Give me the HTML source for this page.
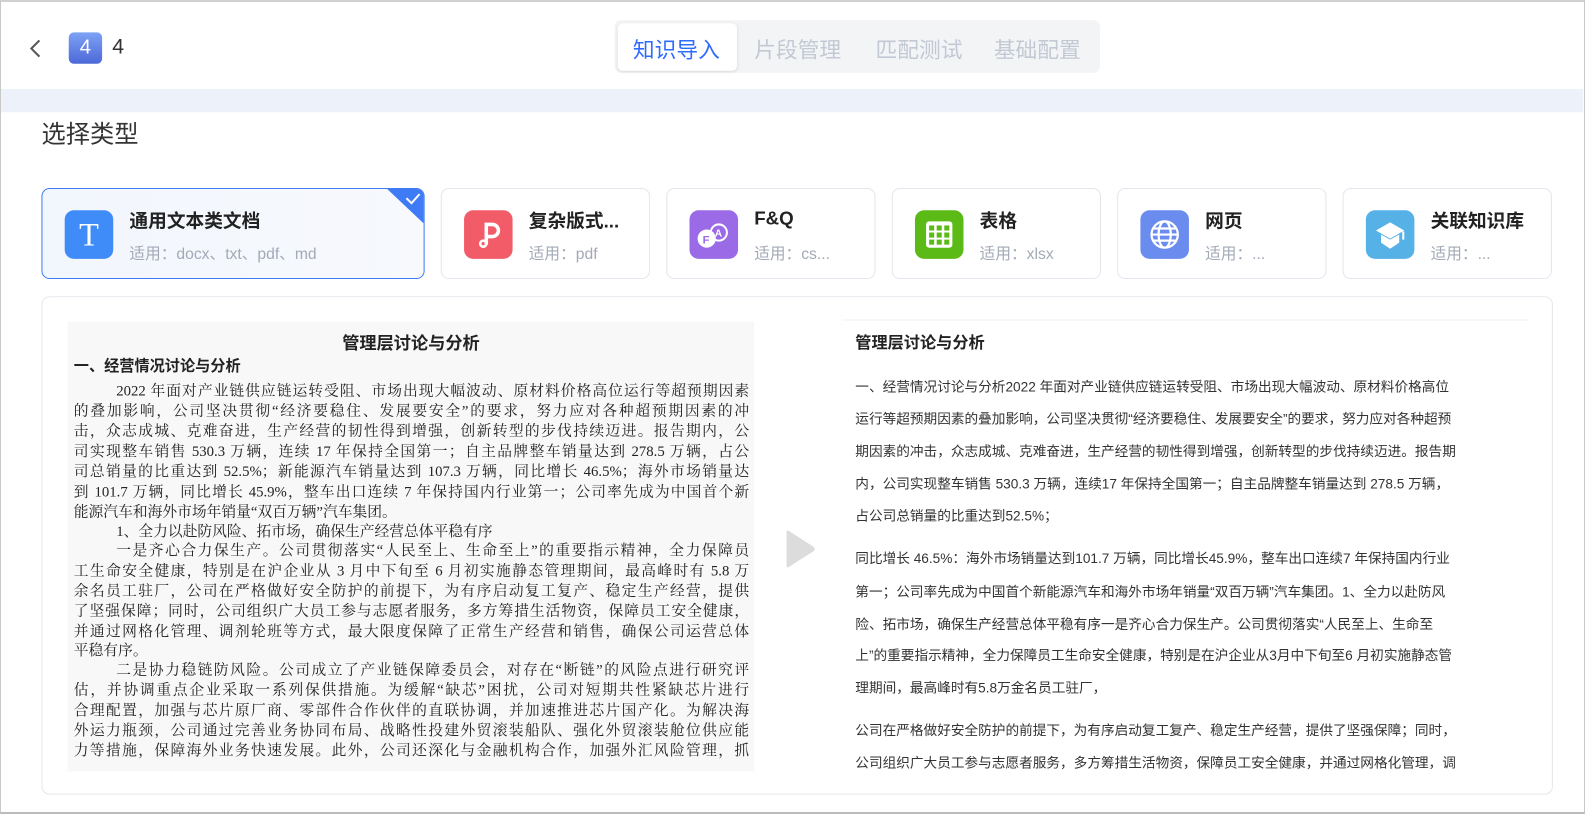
<!DOCTYPE html>
<html><head><meta charset="utf-8"><style>
*{margin:0;padding:0;box-sizing:border-box}
body{width:1585px;height:814px;background:#fff;font-family:"Liberation Sans","Noto Sans CJK SC",sans-serif;position:relative;overflow:hidden}
.frame{position:absolute;left:0;top:0;width:1585px;height:814px;border:1px solid #c8c8c8;border-top:2px solid #d0d0d0;border-bottom:2px solid #bbb}
.wrap{position:absolute;left:0;top:0;width:1585px;height:814px;transform:scale(1.011);transform-origin:0 0}
.abs{position:absolute}
.band{position:absolute;left:1px;top:88px;width:1565px;height:23px;background:#edf1f9}
.tabs{left:608px;top:20px;width:480px;height:52px;background:#f3f4f6;border-radius:6px}
.tab{position:absolute;font-size:21.5px;color:#c3c9d4}
.tab.on{color:#2f6bff}
.active{left:611px;top:23px;width:118px;height:47px;background:#fff;border-radius:5px;box-shadow:0 1px 3px rgba(0,0,0,.1)}
.card{position:absolute;top:186px;height:90px;border:1px solid #e3e6ec;border-radius:8px;background:#fff;overflow:hidden}
.card .ic{position:absolute;left:22px;top:21px;width:48px;height:48px;border-radius:9px}
.card .t{position:absolute;left:86px;top:18px;font-size:18.5px;font-weight:bold;color:#222;white-space:nowrap}
.card .s{position:absolute;left:86px;top:52px;font-size:15.5px;color:#a3a9b6;white-space:nowrap}
.doc{left:67px;top:318px;width:679px;height:445px;background:#f8f8f8;font-family:"Liberation Serif","Noto Serif CJK SC",serif;color:#222;font-size:14.6px}
.doc .l{position:absolute;left:6px;width:668px;text-align:justify;text-align-last:justify;white-space:nowrap;line-height:20px}
.doc .l.n{text-align-last:left}
.rp{left:833px;top:316px;width:679px;height:447px;background:#fff;border-top:1px solid #f0f0f0;overflow:hidden}
.rp .l{position:absolute;left:13px;font-size:13.5px;color:#333;white-space:nowrap;line-height:20px}
</style></head><body>
<div class="frame"></div>
<div class="wrap">
<svg class="abs" style="left:28px;top:38px" width="14" height="20" viewBox="0 0 14 20"><path d="M11 2 L3 10 L11 18" fill="none" stroke="#555" stroke-width="2"/></svg>
<div class="abs" style="left:68px;top:32px;width:33px;height:31px;border-radius:5px;background:linear-gradient(180deg,#7da2f5,#4d68d8);color:#fff;font-size:20px;text-align:center;line-height:31px">4</div>
<div class="abs" style="left:111px;top:35px;font-size:21px;color:#333">4</div>
<div class="abs tabs"></div>
<div class="abs active"></div>
<div class="tab on" style="left:626px;top:33px">知识导入</div>
<div class="tab" style="left:746px;top:33px">片段管理</div>
<div class="tab" style="left:866px;top:33px">匹配测试</div>
<div class="tab" style="left:983px;top:33px">基础配置</div>
<div class="band"></div>
<div class="abs" style="left:41px;top:113px;font-size:24px;color:#333">选择类型</div>

<div class="card" style="left:41px;width:379px;border-color:#3f7bf5;background:linear-gradient(90deg,#f2f6fd,#f7f9fd)">
<div class="ic" style="background:#3f8bf7"><span style="position:absolute;left:0;width:48px;top:6px;text-align:center;color:#fff;font-size:32px;font-family:'Liberation Serif',serif">T</span></div>
<div class="t">通用文本类文档</div><div class="s">适用：docx、txt、pdf、md</div>
<svg class="abs" style="right:0;top:0" width="36" height="34"><polygon points="0,0 36,0 36,34" fill="#3f7bf5"/><path d="M19 9 L24 14 L32 5" fill="none" stroke="#fff" stroke-width="2"/></svg>
</div>
<div class="card" style="left:436px;width:207px">
<div class="ic" style="background:#f25c68"><svg width="48" height="48"><path d="M22 34 V14 h6 a6 6 0 0 1 0 12 h-6" fill="none" stroke="#fff" stroke-width="3.5"/><circle cx="19" cy="33" r="3" fill="none" stroke="#fff" stroke-width="2.5"/></svg></div>
<div class="t">复杂版式...</div><div class="s">适用：pdf</div></div>
<div class="card" style="left:659px;width:207px">
<div class="ic" style="background:#9b6ae6"><svg width="48" height="48"><circle cx="17" cy="28" r="9" fill="#fff"/><circle cx="29" cy="22" r="8" fill="none" stroke="#fff" stroke-width="2"/><text x="13" y="33" font-size="11" font-weight="bold" fill="#9b6ae6" font-family="Liberation Sans">F</text><text x="25" y="26" font-size="10" font-weight="bold" fill="#fff" font-family="Liberation Sans">A</text></svg></div>
<div class="t">F&amp;Q</div><div class="s">适用：cs...</div></div>
<div class="card" style="left:882px;width:207px">
<div class="ic" style="background:#5cba16"><svg width="48" height="48"><rect x="11" y="11" width="26" height="26" rx="3" fill="#fff"/><g fill="#5cba16"><rect x="14" y="15" width="5" height="5"/><rect x="21.5" y="15" width="5" height="5"/><rect x="29" y="15" width="5" height="5"/><rect x="14" y="22" width="5" height="5"/><rect x="21.5" y="22" width="5" height="5"/><rect x="29" y="22" width="5" height="5"/><rect x="14" y="29" width="5" height="5"/><rect x="21.5" y="29" width="5" height="5"/><rect x="29" y="29" width="5" height="5"/></g></svg></div>
<div class="t">表格</div><div class="s">适用：xlsx</div></div>
<div class="card" style="left:1105px;width:207px">
<div class="ic" style="background:#6b8cef"><svg width="48" height="48" fill="none" stroke="#fff" stroke-width="2.2"><circle cx="24" cy="24" r="13"/><ellipse cx="24" cy="24" rx="6" ry="13"/><path d="M11 24h26M13 18h22M13 30h22"/></svg></div>
<div class="t">网页</div><div class="s">适用：...</div></div>
<div class="card" style="left:1328px;width:207px">
<div class="ic" style="background:#55b1e6"><svg width="48" height="48"><polygon points="24,12 38,20 24,28 10,20" fill="#fff"/><path d="M15 24 v8 l9 6 l9 -6 v-8 l-9 5z" fill="#fff"/><path d="M37 21 v8" stroke="#fff" stroke-width="2"/></svg></div>
<div class="t">关联知识库</div><div class="s">适用：...</div></div>

<div class="abs" style="left:41px;top:293px;width:1495px;height:493px;border:1px solid #e5e7eb;border-radius:8px"></div>

<div class="abs doc">
<div class="abs" style="left:0;width:679px;top:7px;text-align:center;font-size:17px;font-weight:bold;font-family:'Liberation Sans','Noto Sans CJK SC',sans-serif">管理层讨论与分析</div>
<div class="l n" style="top:35px;font-weight:bold;font-family:'Liberation Sans','Noto Sans CJK SC',sans-serif;font-size:15px">一、经营情况讨论与分析</div>
<div class="l" style="top:59px;left:48px;width:626px">2022 年面对产业链供应链运转受阻、市场出现大幅波动、原材料价格高位运行等超预期因素</div>
<div class="l" style="top:79px">的叠加影响，公司坚决贯彻“经济要稳住、发展要安全”的要求，努力应对各种超预期因素的冲</div>
<div class="l" style="top:99px">击，众志成城、克难奋进，生产经营的韧性得到增强，创新转型的步伐持续迈进。报告期内，公</div>
<div class="l" style="top:119px">司实现整车销售 530.3 万辆，连续 17 年保持全国第一；自主品牌整车销量达到 278.5 万辆，占公</div>
<div class="l" style="top:139px">司总销量的比重达到 52.5%；新能源汽车销量达到 107.3 万辆，同比增长 46.5%；海外市场销量达</div>
<div class="l" style="top:159px">到 101.7 万辆，同比增长 45.9%，整车出口连续 7 年保持国内行业第一；公司率先成为中国首个新</div>
<div class="l n" style="top:179px">能源汽车和海外市场年销量“双百万辆”汽车集团。</div>
<div class="l n" style="top:198px;left:48px">1、全力以赴防风险、拓市场，确保生产经营总体平稳有序</div>
<div class="l" style="top:217px;left:48px;width:626px">一是齐心合力保生产。公司贯彻落实“人民至上、生命至上”的重要指示精神，全力保障员</div>
<div class="l" style="top:237px">工生命安全健康，特别是在沪企业从 3 月中下旬至 6 月初实施静态管理期间，最高峰时有 5.8 万</div>
<div class="l" style="top:257px">余名员工驻厂，公司在严格做好安全防护的前提下，为有序启动复工复产、稳定生产经营，提供</div>
<div class="l" style="top:277px">了坚强保障；同时，公司组织广大员工参与志愿者服务，多方筹措生活物资，保障员工安全健康，</div>
<div class="l" style="top:297px">并通过网格化管理、调剂轮班等方式，最大限度保障了正常生产经营和销售，确保公司运营总体</div>
<div class="l n" style="top:316px">平稳有序。</div>
<div class="l" style="top:335px;left:48px;width:626px">二是协力稳链防风险。公司成立了产业链保障委员会，对存在“断链”的风险点进行研究评</div>
<div class="l" style="top:355px">估，并协调重点企业采取一系列保供措施。为缓解“缺芯”困扰，公司对短期共性紧缺芯片进行</div>
<div class="l" style="top:375px">合理配置，加强与芯片原厂商、零部件合作伙伴的直联协调，并加速推进芯片国产化。为解决海</div>
<div class="l" style="top:395px">外运力瓶颈，公司通过完善业务协同布局、战略性投建外贸滚装船队、强化外贸滚装舱位供应能</div>
<div class="l" style="top:415px">力等措施，保障海外业务快速发展。此外，公司还深化与金融机构合作，加强外汇风险管理，抓</div>
</div>

<svg class="abs" style="left:776px;top:522px" width="32" height="42"><path d="M4 3 L29 19 Q31 21 29 23 L4 39 Q2 40 2 37 V5 Q2 2 4 3Z" fill="#dcdcdc"/></svg>

<div class="abs rp">
<div class="l" style="top:13px;font-size:16px;font-weight:bold;color:#222">管理层讨论与分析</div>
<div class="l" style="top:56px">一、经营情况讨论与分析2022 年面对产业链供应链运转受阻、市场出现大幅波动、原材料价格高位</div>
<div class="l" style="top:88px">运行等超预期因素的叠加影响，公司坚决贯彻“经济要稳住、发展要安全”的要求，努力应对各种超预</div>
<div class="l" style="top:120px">期因素的冲击，众志成城、克难奋进，生产经营的韧性得到增强，创新转型的步伐持续迈进。报告期</div>
<div class="l" style="top:152px">内，公司实现整车销售 530.3 万辆，连续17 年保持全国第一；自主品牌整车销量达到 278.5 万辆，</div>
<div class="l" style="top:184px">占公司总销量的比重达到52.5%；</div>
<div class="l" style="top:226px">同比增长 46.5%：海外市场销量达到101.7 万辆，同比增长45.9%，整车出口连续7 年保持国内行业</div>
<div class="l" style="top:259px">第一；公司率先成为中国首个新能源汽车和海外市场年销量“双百万辆”汽车集团。1、全力以赴防风</div>
<div class="l" style="top:291px">险、拓市场，确保生产经营总体平稳有序一是齐心合力保生产。公司贯彻落实“人民至上、生命至</div>
<div class="l" style="top:322px">上”的重要指示精神，全力保障员工生命安全健康，特别是在沪企业从3月中下旬至6 月初实施静态管</div>
<div class="l" style="top:354px">理期间，最高峰时有5.8万金名员工驻厂，</div>
<div class="l" style="top:396px">公司在严格做好安全防护的前提下，为有序启动复工复产、稳定生产经营，提供了坚强保障；同时，</div>
<div class="l" style="top:428px">公司组织广大员工参与志愿者服务，多方筹措生活物资，保障员工安全健康，并通过网格化管理，调</div>
</div>
</div>
</body></html>
